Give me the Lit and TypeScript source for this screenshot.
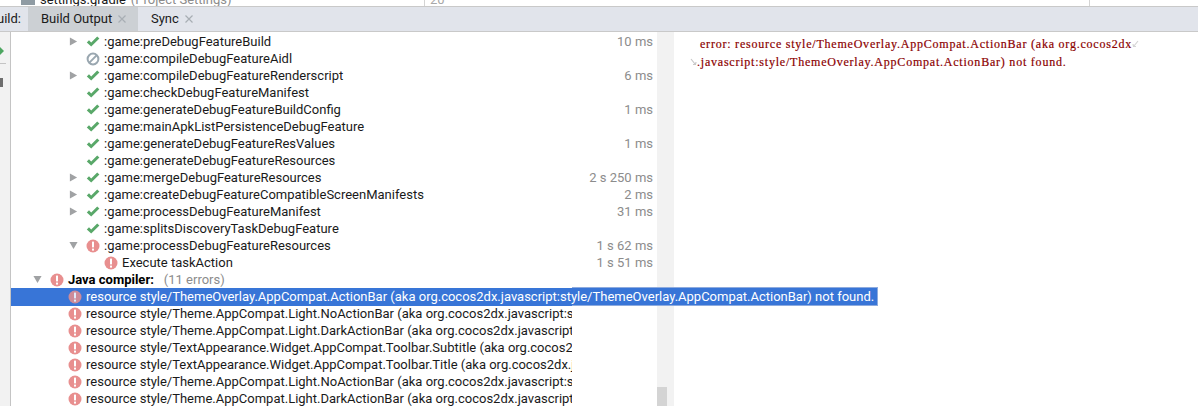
import { LitElement, html, css, svg } from "lit";
import { customElement } from "lit/decorators.js";

type Status = "ok" | "skip" | "err";
interface Row { t: string; s: Status; x: number; arrow?: "r" | "d"; time?: string; bold?: boolean; note?: string; sel?: boolean; }

const R = (t: string, s: Status, x: number, arrow?: "r" | "d", time?: string): Row => ({ t, s, x, arrow, time });
const rows: Row[] = [
  R(":game:preDebugFeatureBuild", "ok", 93, "r", "10 ms"),
  R(":game:compileDebugFeatureAidl", "skip", 93),
  R(":game:compileDebugFeatureRenderscript", "ok", 93, "r", "6 ms"),
  R(":game:checkDebugFeatureManifest", "ok", 93),
  R(":game:generateDebugFeatureBuildConfig", "ok", 93, undefined, "1 ms"),
  R(":game:mainApkListPersistenceDebugFeature", "ok", 93),
  R(":game:generateDebugFeatureResValues", "ok", 93, undefined, "1 ms"),
  R(":game:generateDebugFeatureResources", "ok", 93),
  R(":game:mergeDebugFeatureResources", "ok", 93, "r", "2 s 250 ms"),
  R(":game:createDebugFeatureCompatibleScreenManifests", "ok", 93, "r", "2 ms"),
  R(":game:processDebugFeatureManifest", "ok", 93, "r", "31 ms"),
  R(":game:splitsDiscoveryTaskDebugFeature", "ok", 93),
  R(":game:processDebugFeatureResources", "err", 93, "d", "1 s 62 ms"),
  R("Execute taskAction", "err", 111, undefined, "1 s 51 ms"),
  { t: "Java compiler:", s: "err", x: 57, arrow: "d", bold: true, note: "(11 errors)" },
  { t: "resource style/ThemeOverlay.AppCompat.ActionBar (aka org.cocos2dx.javascript:style/ThemeOverlay.AppCompat.ActionBar) not found.", s: "err", x: 75, sel: true },
  R("resource style/Theme.AppCompat.Light.NoActionBar (aka org.cocos2dx.javascript:style/Theme.AppCompat.Light.NoActionBar) not found.", "err", 75),
  R("resource style/Theme.AppCompat.Light.DarkActionBar (aka org.cocos2dx.javascript:style/Theme.AppCompat.Light.DarkActionBar) not found.", "err", 75),
  R("resource style/TextAppearance.Widget.AppCompat.Toolbar.Subtitle (aka org.cocos2dx.javascript:style/TextAppearance) not found.", "err", 75),
  R("resource style/TextAppearance.Widget.AppCompat.Toolbar.Title (aka org.cocos2dx.javascript:style/TextAppearance) not found.", "err", 75),
  R("resource style/Theme.AppCompat.Light.NoActionBar (aka org.cocos2dx.javascript:style/Theme.AppCompat.Light.NoActionBar) not found.", "err", 75),
  R("resource style/Theme.AppCompat.Light.DarkActionBar (aka org.cocos2dx.javascript:style/Theme.AppCompat.Light.DarkActionBar) not found.", "err", 75),
];

const icon = (s: Status) => {
  if (s === "ok") return svg`<svg class="ic" viewBox="0 0 14 14"><path d="M0.8 7.4 L5.2 11.6 L13.4 3.4 L11.2 1.6 L5.2 7.6 L3 5.2 Z" fill="#59a869"/></svg>`;
  if (s === "skip") return svg`<svg class="ic" viewBox="0 0 14 14"><circle cx="7" cy="7" r="5.4" fill="none" stroke="#9aa7b0" stroke-width="2"/><path d="M3.4 10.6 L10.6 3.4" stroke="#9aa7b0" stroke-width="2"/></svg>`;
  return svg`<svg class="ic" viewBox="0 0 14 14"><circle cx="7" cy="7" r="6.5" fill="#e88f8f"/><rect x="6" y="2.6" width="2" height="5.8" fill="#fff"/><rect x="6" y="9.6" width="2" height="2" fill="#fff"/></svg>`;
};
const arrow = (a: "r" | "d") => a === "r"
  ? svg`<svg class="ar" viewBox="0 0 10 10"><path d="M1 0.5 L9 5 L1 9.5 Z" fill="#a0a2a4"/></svg>`
  : svg`<svg class="ar" viewBox="0 0 10 10"><path d="M0.5 1 L9.5 1 L5 9 Z" fill="#a0a2a4"/></svg>`;

@customElement("app-root")
export class AppRoot extends LitElement {
  static styles = css`
    :host { display: block; width: 1198px; height: 406px; overflow: hidden; background: #fff; font-family: Roboto, "Noto Sans", sans-serif; font-size: 13px; color: #1a1a1a; }
    .crumb { height: 6px; overflow: hidden; display: flex; align-items: flex-end; background: #fff; border-bottom: 1px solid #c9c9c9; position: relative; }
    .crumb .inner { display: flex; align-items: center; gap: 5px; height: 17px; padding-left: 21px; flex: none; position: relative; top: 2px; }
    .crumb .ele { width: 14px; height: 12px; background: #8f9ba3; border-radius: 3px 3px 0 0; margin-bottom: 2px; }
    .crumb .nm { line-height: 17px; }
    .crumb .hint { color: #8c8c8c; }
    .crumb .tick { position: absolute; top: 0; bottom: 0; width: 1px; background: #d4d4d4; }
    .crumb .t1 { left: 424px; }
    .crumb .t2 { left: 1089px; }
    .crumb .ln-no { position: absolute; left: 430px; top: -9px; color: #a8a8a8; line-height: 17px; }
    .tabs { height: 24px; display: flex; align-items: stretch; background: #e1e4eb; border-bottom: 1px solid #c9c9c9; line-height: 24px; }
    .lead { width: 28px; flex: none; overflow: hidden; display: flex; justify-content: flex-end; padding-right: 7px; box-sizing: border-box; white-space: nowrap; }
    .tab { display: flex; align-items: center; gap: 6px; }
    .tab.on { background: #ccd0d4; width: 110px; box-sizing: border-box; padding-left: 13px; }
    .tab.off { padding-left: 13px; }
    .x { width: 8px; height: 8px; flex: none; }
    .main { display: flex; height: 374px; }
    .gutter { width: 10px; flex: none; background: #f2f2f2; border-right: 1px solid #c4c4c4; position: relative; }
    .gutter .g1 { position: absolute; left: 0; top: 15px; width: 0; height: 0; border-left: 4px solid #4da660; border-top: 4px solid transparent; border-bottom: 4px solid transparent; }
    .gutter .g2 { position: absolute; left: 0; top: 31px; width: 6px; height: 1px; background: #c4c4c4; }
    .gutter .g4 { position: absolute; left: 0; top: 46px; width: 3px; height: 9px; background: #6e6e6e; }
    .tree { width: 646px; flex: none; padding-top: 1px; position: relative; }
    .row { height: 17px; display: flex; align-items: center; position: relative; width: 561px; white-space: nowrap; overflow: hidden; line-height: 17px; }
    .row.timed { width: 646px; }
    .row.sel { width: 867px; height: 18px; margin-bottom: -1px; overflow: visible; background: #3875d7; color: #fff; z-index: 2; }
    .tip { position: absolute; left: 561px; top: -1px; width: 306px; height: 19px; box-sizing: border-box; border: 1px solid #8eabde; border-left: none; pointer-events: none; }
    .ic { width: 14px; height: 14px; flex: none; position: absolute; top: 2px; }
    .row.sel .ic { opacity: .85; }
    .ar { width: 9px; height: 9px; position: absolute; top: 4px; }
    .lbl { position: absolute; top: 0; }
    .time { margin-left: auto; padding-right: 4px; color: #8c8c8c; }
    .note { color: #8c8c8c; margin-left: 10px; }
    b { font-weight: 700; color: #000; }
    .sb { width: 17px; flex: none; background: #f2f2f2; position: relative; }
    .thumb { position: absolute; left: 0; bottom: 0; width: 10px; height: 19px; background: #d4d4d4; }
    .con { flex: 1; padding: 3px 0 0 26px; font-family: "Liberation Serif", serif; font-size: 12px; letter-spacing: 0.78px; color: #8b0000; -webkit-text-stroke: 0.2px #8b0000; line-height: 18px; }
    .ln { display: flex; align-items: center; height: 18px; white-space: pre; }
    .ln.w { margin-left: -10px; }
    .wrap { width: 7px; height: 8px; flex: none; }
  `;

  private x() {
    return html`<svg class="x" viewBox="0 0 8 8"><path d="M0.5 0.5 L7.5 7.5 M7.5 0.5 L0.5 7.5" stroke="#a8aeb4" stroke-width="1.2"/></svg>`;
  }

  private row(r: Row) {
    const cls = "row" + (r.time ? " timed" : "") + (r.sel ? " sel" : "");
    // positions are relative to the tree panel, which starts at x = 11
    const ix = r.x - 11 - 7;
    return html`<div class=${cls}>
      ${r.arrow ? html`<span style="position:absolute;left:${ix - 17}px;top:0;width:9px;height:17px">${arrow(r.arrow)}</span>` : ""}
      <span style="position:absolute;left:${ix}px;top:0;width:14px;height:17px">${icon(r.s)}</span>
      <span class="lbl" style="left:${ix + 18}px">${r.bold ? html`<b>${r.t}</b>` : r.t}${r.note ? html`<span class="note">${r.note}</span>` : ""}</span>
      ${r.time ? html`<span class="time">${r.time}</span>` : ""}
      ${r.sel ? html`<span class="tip"></span>` : ""}
    </div>`;
  }

  render() {
    return html`
      <div class="crumb"><div class="inner"><span class="ele"></span><span class="nm">settings.gradle</span><span class="hint">(Project Settings)</span></div><span class="tick t1"></span><span class="ln-no">20</span><span class="tick t2"></span></div>
      <div class="tabs">
        <div class="lead">Build:</div>
        <div class="tab on">Build Output ${this.x()}</div>
        <div class="tab off">Sync ${this.x()}</div>
      </div>
      <div class="main">
        <div class="gutter"><span class="g1"></span><span class="g2"></span><span class="g4"></span></div>
        <div class="tree">${rows.map((r) => this.row(r))}</div>
        <div class="sb"><span class="thumb"></span></div>
        <div class="con">
          <div class="ln">error: resource style/ThemeOverlay.AppCompat.ActionBar (aka org.cocos2dx<svg class="wrap" viewBox="0 0 7 8"><path d="M6 1 L2 6 M1 4 L1.5 6.5 L4 6.5" fill="none" stroke="#d5d5d5" stroke-width="1.2"/></svg></div>
          <div class="ln w"><svg class="wrap" viewBox="0 0 7 8"><path d="M1 1 L5 6 M6 4 L5.5 6.5 L3 6.5" fill="none" stroke="#c8c8c8" stroke-width="1.2"/></svg>.javascript:style/ThemeOverlay.AppCompat.ActionBar) not found.</div>
        </div>
      </div>`;
  }
}
